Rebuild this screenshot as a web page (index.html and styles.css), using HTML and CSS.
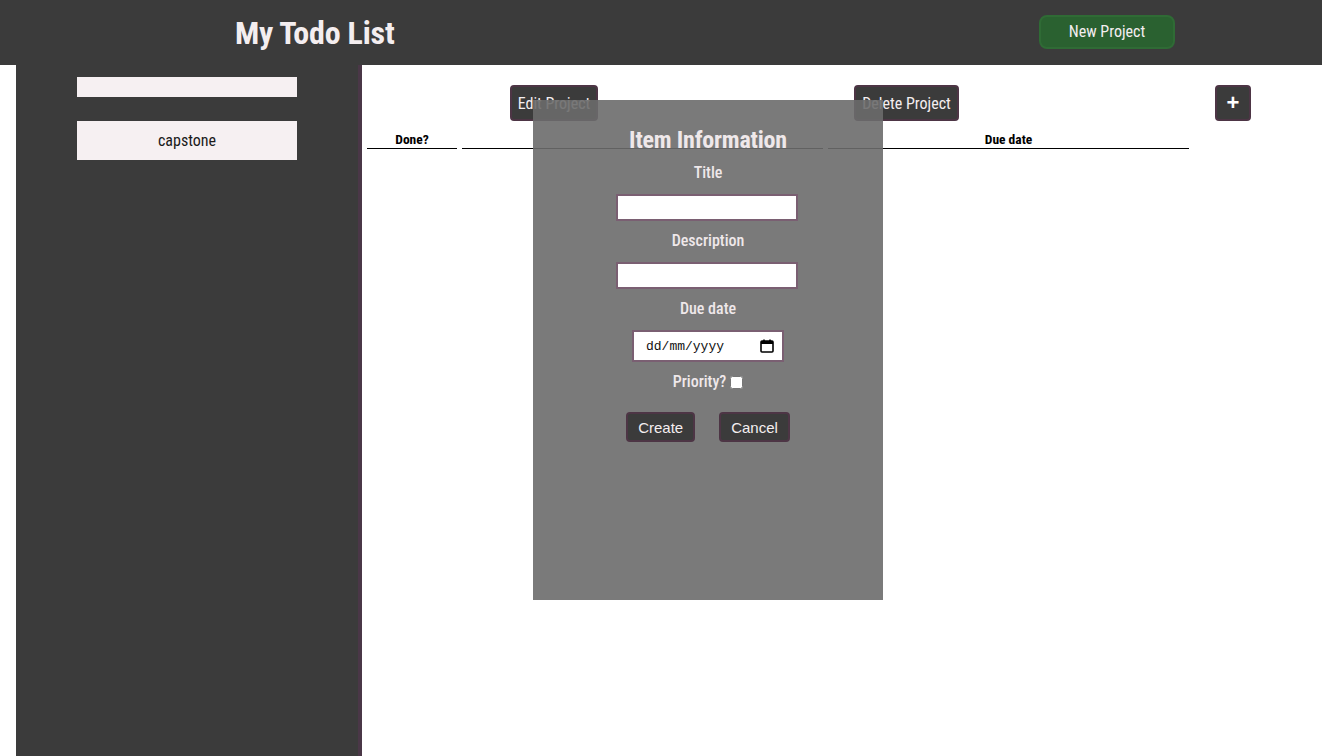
FILE: index.html
```html
<!DOCTYPE html>
<html>
<head>
<meta charset="utf-8">
<link rel="stylesheet" href="styles.css">
</head>
<body>
<header class="topbar">
  <h1 class="app-title">My Todo List</h1>
  <button class="new-project">New Project</button>
</header>
<div class="layout">
  <aside class="sidebar">
    <div class="project-item empty"></div>
    <div class="project-item">capstone</div>
  </aside>
  <main class="main">
    <div class="toolbar">
      <button class="btn edit">Edit Project</button>
      <button class="btn delete">Delete Project</button>
      <button class="btn plus">+</button>
    </div>
    <div class="table-head">
      <div class="col done">Done?</div>
      <div class="col title"></div>
      <div class="col due">Due date</div>
    </div>
  </main>
</div>
<div class="modal">
  <h2 class="modal-title">Item Information</h2>
  <label class="field-label first">Title</label>
  <input class="text-input" type="text">
  <label class="field-label">Description</label>
  <input class="text-input" type="text">
  <label class="field-label">Due date</label>
  <div class="date-input">
    <span class="date-text">dd/mm/yyyy</span>
    <svg class="cal" width="14" height="14" viewBox="0 0 14 14">
      <rect x="1" y="2" width="12" height="11" rx="1" fill="none" stroke="#000" stroke-width="1.6"/>
      <rect x="1" y="2" width="12" height="3" fill="#000"/>
      <rect x="3.2" y="0.5" width="1.6" height="2.5" fill="#000"/>
      <rect x="9.2" y="0.5" width="1.6" height="2.5" fill="#000"/>
    </svg>
  </div>
  <label class="field-label priority">Priority? <input class="check" type="checkbox"></label>
  <div class="modal-actions">
    <button class="mbtn">Create</button>
    <button class="mbtn">Cancel</button>
  </div>
</div>
</body>
</html>
```
FILE: styles.css
```css
html, body { margin: 0; padding: 0; }
body {
  background: #ffffff;
  font-family: "Roboto Condensed", "Liberation Sans Narrow", Roboto, sans-serif;
  height: 756px;
  overflow: hidden;
}
.topbar {
  height: 65px;
  background: #3b3b3b;
  display: flex;
  align-items: center;
}
.app-title {
  margin: 0 0 0 235px;
  color: #f4eef0;
  font-size: 32px;
  font-weight: 700;
  letter-spacing: -0.2px;
}
.new-project {
  margin-left: auto;
  margin-right: 147px;
  margin-top: -2px;
  width: 136px;
  height: 34px;
  background: #2a6130;
  border: 2px solid #2f6b35;
  border-radius: 8px;
  color: #f4eef0;
  font-family: inherit;
  font-size: 16px;
  font-weight: 400;
}
.layout {
  display: flex;
  height: 691px;
}
.sidebar {
  margin-left: 16px;
  width: 342px;
  background: #3b3b3b;
  border-right: 4px solid #4a3747;
  display: flex;
  flex-direction: column;
  align-items: flex-start;
  padding-top: 12px;
  gap: 24px;
}
.project-item {
  margin-left: 61px;
  width: 220px;
  height: 39px;
  background: #f6f0f2;
  color: #1a1a1a;
  font-size: 16px;
  display: flex;
  align-items: center;
  justify-content: center;
}
.project-item.empty { height: 20px; }
.main {
  flex: 1;
  padding-top: 20px;
  padding-left: 5px;
}
.toolbar {
  display: flex;
  align-items: center;
  height: 36px;
}
.btn {
  height: 36px;
  background: #3b3b3b;
  border: 2px solid #4d3545;
  border-radius: 4px;
  color: #f4eef0;
  font-family: inherit;
  font-size: 16px;
  padding: 0;
  white-space: nowrap;
}
.edit { margin-left: 143px; width: 88px; }
.delete { margin-left: 256px; width: 105px; }
.plus {
  margin-left: 256px;
  width: 36px;
  font-size: 22px;
  font-weight: 700;
  line-height: 1;
  font-family: "Liberation Sans", Arial, sans-serif;
  color: #ffffff;
}
.table-head {
  display: flex;
  margin-top: 10px;
  gap: 5px;
}
.col {
  border-bottom: 1px solid #000;
  font-size: 13.5px;
  font-weight: 700;
  text-align: center;
  height: 17px;
  color: #000;
}
.col.done { width: 90px; }
.col.title { width: 361px; }
.col.due { width: 361px; }
.modal {
  position: absolute;
  left: 533px;
  top: 100px;
  width: 350px;
  height: 500px;
  background: rgba(107, 107, 107, 0.9);
  display: flex;
  flex-direction: column;
  align-items: center;
  color: #efe8ea;
}
.modal-title {
  margin: 25px 0 0 0;
  font-size: 24px;
  font-weight: 700;
  line-height: 30px;
  letter-spacing: -0.2px;
}
.field-label {
  font-size: 16px;
  font-weight: 500;
  margin-top: 10px;
  line-height: 20px;
}
.field-label.first { margin-top: 8px; }
.text-input {
  margin-top: 11px;
  margin-left: -2px;
  width: 182px;
  height: 27px;
  box-sizing: border-box;
  border: 2px solid #7a5f72;
  background: #fff;
  padding: 0 4px;
}
.date-input {
  margin-top: 11px;
  width: 152px;
  height: 32px;
  box-sizing: border-box;
  border: 2px solid #7a5f72;
  background: #fff;
  display: flex;
  align-items: center;
  padding: 0 8px 0 12px;
  justify-content: space-between;
}
.date-text {
  font-family: "Liberation Mono", "DejaVu Sans Mono", monospace;
  font-size: 13px;
  color: #111;
  margin-top: 1px;
}
.cal { display: block; }
.priority {
  display: flex;
  align-items: center;
  gap: 2px;
}
.check {
  margin: 0 0 0 2px;
  width: 13px;
  height: 13px;
}
.modal-actions {
  margin-top: 20px;
  display: flex;
  gap: 24px;
}
.mbtn {
  height: 30px;
  background: #3b3b3b;
  border: 2px solid #4d3545;
  border-radius: 4px;
  color: #f4eef0;
  font-family: "Liberation Sans", Arial, sans-serif;
  font-size: 15px;
  padding: 0 10px;
}
```
